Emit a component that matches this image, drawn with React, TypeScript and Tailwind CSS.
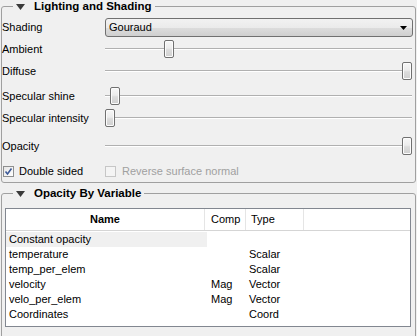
import React from 'react';

const sliders = [
  { label: 'Ambient', left: 59, mt: 'mt-0' },
  { label: 'Diffuse', left: 297, mt: 'mt-0' },
  { label: 'Specular shine', left: 5, mt: 'mt-[3px]' },
  { label: 'Specular intensity', left: 0, mt: 'mt-0' },
  { label: 'Opacity', left: 297, mt: 'mt-[6px]' },
];

const variables = [
  { name: 'Constant opacity', comp: '', type: '', selected: true },
  { name: 'temperature', comp: '', type: 'Scalar' },
  { name: 'temp_per_elem', comp: '', type: 'Scalar' },
  { name: 'velocity', comp: 'Mag', type: 'Vector' },
  { name: 'velo_per_elem', comp: 'Mag', type: 'Vector' },
  { name: 'Coordinates', comp: '', type: 'Coord' },
];

function GroupTitle({ title }: { title: string }) {
  return (
    <legend className="ml-[11px] flex h-[13px] items-center px-[3px] leading-[13px]">
      <svg width="9" height="6" viewBox="0 0 9 6" className="mr-[9px]">
        <polygon points="0,0 9,0 4.5,6" fill="#3a3a3a" />
      </svg>
      <span className="text-[11.5px] font-bold text-black">{title}</span>
    </legend>
  );
}

function Slider({ left }: { left: number }) {
  return (
    <div className="relative mr-[1px] flex h-full flex-1 items-center">
      <div className="h-[2px] w-full border-t border-b border-t-[#b0b0b0] border-b-white" />
      <div
        className="absolute top-[2px] h-[18px] w-[10px] rounded-[2px] border border-[#707070] bg-[linear-gradient(to_bottom,#f7f7f7_0%,#ececec_45%,#dcdcdc_55%,#d0d0d0_100%)] shadow-[inset_0_0_0_1px_#fcfcfc]"
        style={{ left }}
      />
    </div>
  );
}

function CheckBox({ checked, disabled }: { checked?: boolean; disabled?: boolean }) {
  return (
    <div
      className={
        disabled
          ? 'flex h-[11px] w-[11px] items-center justify-center border border-[#c6c6c6] bg-[#f4f4f4]'
          : 'flex h-[11px] w-[11px] items-center justify-center border border-[#8e8f8f] bg-[linear-gradient(to_bottom_right,#e6e6e6,#ffffff)]'
      }
    >
      {checked && (
        <svg width="9" height="9" viewBox="0 0 9 9">
          <polyline
            points="1.5,4.5 3.5,7 7.5,1.5"
            fill="none"
            stroke="#3d5a98"
            strokeWidth="1.6"
          />
        </svg>
      )}
    </div>
  );
}

export default function App() {
  return (
    <div className="h-[336px] w-[417px] overflow-hidden bg-[#f0f0f0] font-['Liberation_Sans',Arial,sans-serif] text-[11px] text-black">
      {/* Lighting and Shading */}
      <fieldset className="ml-[1px] h-[183px] w-[415px] rounded-[3px] border border-[#a0a0a0]">
        <GroupTitle title="Lighting and Shading" />
        <div className="flex flex-col pr-[2px]">
          <div className="mt-[4px] flex h-[21px] items-start">
            <div className="flex h-[21px] w-[103px] items-center">Shading</div>
            <div className="mt-[1px] flex h-[19px] flex-1 items-center justify-between rounded-[3px] border border-[#707070] bg-[linear-gradient(to_bottom,#f2f2f2_0%,#ebebeb_50%,#dddddd_51%,#cfcfcf_100%)] pr-[5px] pl-[3px]">
              <span>Gouraud</span>
              <svg width="7" height="4" viewBox="0 0 7 4">
                <polygon points="0,0 7,0 3.5,4" fill="#000" />
              </svg>
            </div>
          </div>
          {sliders.map((s) => (
            <div key={s.label} className={`flex h-[22px] items-center ${s.mt}`}>
              <div className="w-[103px]">{s.label}</div>
              <Slider left={s.left} />
            </div>
          ))}
          <div className="mt-[5px] flex h-[18px] items-center">
            <div className="flex w-[103px] items-center">
              <div className="ml-[1px]">
                <CheckBox checked />
              </div>
              <span className="ml-[5px]">Double sided</span>
            </div>
            <div className="flex items-center">
              <CheckBox disabled />
              <span className="ml-[6px] text-[#a0a0a0]">Reverse surface normal</span>
            </div>
          </div>
        </div>
      </fieldset>

      {/* Opacity By Variable */}
      <fieldset className="mt-[4px] ml-[1px] h-[170px] w-[415px] rounded-[3px] border border-[#a0a0a0]">
        <GroupTitle title="Opacity By Variable" />
        <div className="mt-[8px] ml-[3px] h-[119px] w-[406px] border border-[#828790] bg-white">
          <div className="grid h-[22px] grid-cols-[199px_41px_58px_1fr] border-b border-[#d5d5d5]">
            <div className="flex items-center justify-center border-r border-[#e5e5e5] font-bold">Name</div>
            <div className="flex items-center border-r border-[#e5e5e5] pl-[6px]">Comp</div>
            <div className="flex items-center border-r border-[#e5e5e5] pl-[5px]">Type</div>
            <div />
          </div>
          <div className="pt-[1px]">
            {variables.map((v) => (
              <div key={v.name} className="grid h-[15px] grid-cols-[201px_39px_58px_1fr] leading-[15px]">
                <div className={v.selected ? 'bg-[#f0f0f0] pl-[3px]' : 'pl-[3px]'}>{v.name}</div>
                <div className="pl-[4px]">{v.comp}</div>
                <div className="pl-[3px]">{v.type}</div>
                <div />
              </div>
            ))}
          </div>
        </div>
      </fieldset>
    </div>
  );
}
